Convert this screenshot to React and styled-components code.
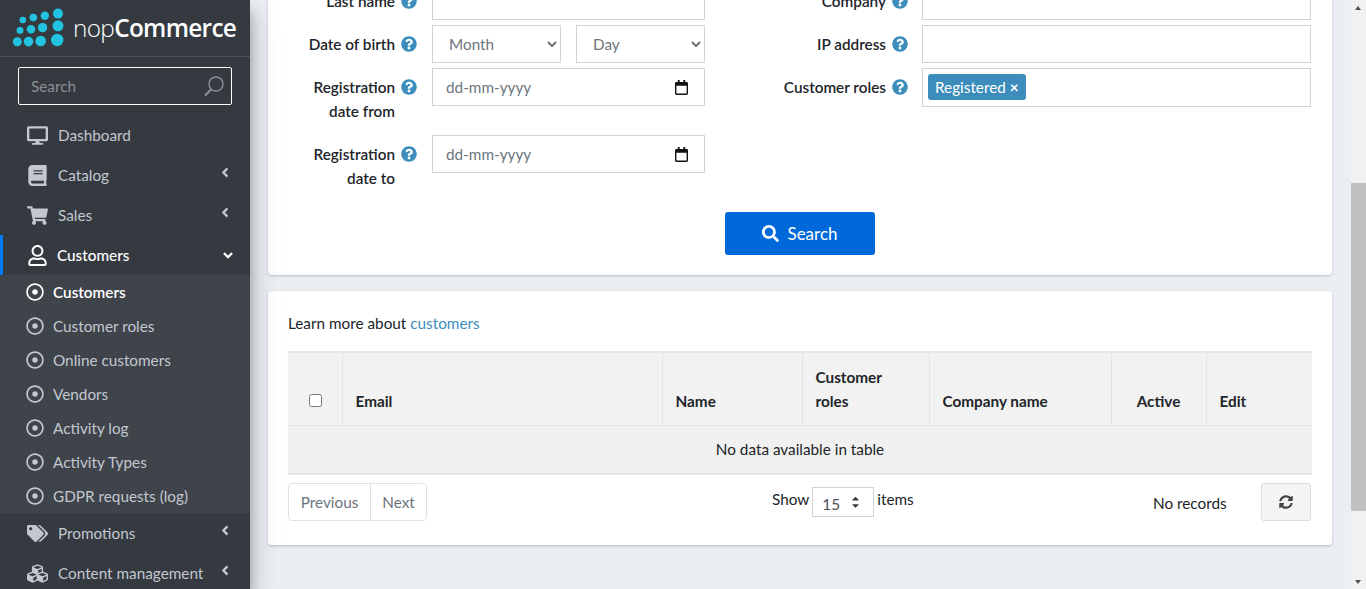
import React from "react";
import styled, { createGlobalStyle } from "styled-components";
import {
  FaDesktop,
  FaBook,
  FaShoppingCart,
  FaRegUser,
  FaRegDotCircle,
  FaTags,
  FaCubes,
  FaAngleLeft,
  FaAngleDown,
  FaQuestionCircle,
  FaSearch,
  FaSyncAlt,
  FaCaretUp,
  FaCaretDown
} from "react-icons/fa";

const GlobalStyle = createGlobalStyle`
  html, body, #root {
    margin: 0;
    height: 100%;
    overflow: hidden;
  }
  body {
    font-family: "Lato", "Liberation Sans", sans-serif;
    font-size: 15.3px;
    color: #212529;
    background: #ebeef3;
  }
`;

const Page = styled.div`
  display: flex;
  width: 1366px;
  height: 589px;
  overflow: hidden;
`;

const Sider = styled.aside`
  flex: 0 0 250px;
  background: #343a40;
  box-shadow: 0 14px 28px rgba(0, 0, 0, 0.25), 0 10px 10px rgba(0, 0, 0, 0.22);
  overflow: hidden;
  z-index: 2;
`;

const Brand = styled.div`
  display: flex;
  align-items: center;
  height: 56px;
  padding-left: 13px;
  border-bottom: 1px solid #4b545c;
`;

const BrandName = styled.span`
  margin-left: 8px;
  margin-top: -2px;
  font-family: "Open Sans", sans-serif;
  font-size: 24.4px;
  letter-spacing: -0.7px;
  color: #fff;
  font-weight: 300;
  b {
    font-weight: 600;
  }
`;

const SideSearch = styled.div`
  display: flex;
  align-items: center;
  justify-content: space-between;
  box-sizing: border-box;
  width: 214px;
  height: 38px;
  margin: 10px 0 10px 18px;
  padding: 0 6px 0 12px;
  border: 1px solid #fff;
  border-radius: 2px;
  color: #8b9096;
`;

const NavRow = styled.div`
  display: flex;
  align-items: center;
  box-sizing: border-box;
  height: 40px;
  padding-left: ${p => (p.$active ? "23px" : "26px")};
  border-left: ${p => (p.$active ? "3px solid #007bff" : "none")};
  color: ${p => (p.$active ? "#fff" : "#c2c7d0")};
  font-weight: ${p => (p.$active ? 500 : 400)};
`;

const NavIcon = styled.span`
  display: flex;
  justify-content: center;
  flex: 0 0 22px;
  margin-right: ${p => (p.$active ? "9px" : "10px")};
  font-size: 21px;
`;

const NavLabel = styled.span`
  flex: 1;
`;

const NavCaret = styled.span`
  display: flex;
  justify-content: center;
  width: 14px;
  margin: ${p => (p.$open ? "0 15px 0 0" : "-5px 18px 0 0")};
  font-size: 15px;
`;

const SubMenu = styled.div`
  background: #3f444b;
`;

const SubRow = styled.div`
  display: flex;
  align-items: center;
  gap: 9px;
  height: 34px;
  padding-left: 26px;
  color: ${p => (p.$active ? "#fff" : "#c2c7d0")};
  font-weight: ${p => (p.$active ? 600 : 400)};
  svg {
    font-size: 18px;
  }
`;

const Main = styled.main`
  flex: 1;
  min-width: 0;
  padding: 0 18px;
`;

const Card = styled.section`
  width: 1064px;
  box-sizing: border-box;
  background: #fff;
  border-radius: 4px;
  box-shadow: 0 1px 3px rgba(0, 0, 0, 0.2);
`;

const SearchCard = styled(Card)`
  margin-top: -18px;
  padding: 0 21px 20px;
`;

const ListCard = styled(Card)`
  margin-top: 16px;
  height: 254px;
  padding: 20px;
`;

const FormGrid = styled.div`
  display: flex;
`;

const FormColumn = styled.div`
  display: flex;
  flex-direction: column;
  gap: 5px;
  flex: ${p => (p.$right ? "0 0 590px" : "0 0 416px")};
  margin-left: ${p => (p.$right ? "16px" : "0")};
`;

const FormRow = styled.div`
  display: flex;
  height: ${p => p.$height}px;
`;

const FieldLabel = styled.label`
  flex: 0 0 ${p => (p.$wide ? "165px" : "106px")};
  text-align: right;
  font-weight: 600;
  line-height: 24px;
  padding-top: 7px;
  color: #212529;
`;

const HelpIcon = styled.span`
  flex: 0 0 ${p => (p.$wide ? "36px" : "37px")};
  padding: 11px 0 0 6px;
  box-sizing: border-box;
  color: #3c8dbc;
  font-size: 16px;
`;

const FieldBox = styled.div`
  flex: 1;
  height: ${p => p.$height || 38}px;
  box-sizing: border-box;
  border: 1px solid #ced4da;
  background: #fff;
`;

const DateBox = styled(FieldBox)`
  display: flex;
  align-items: center;
  justify-content: space-between;
  padding: 0 16px 0 13px;
  color: #6c757d;
`;

const RolesBox = styled(FieldBox)`
  padding: 5px 5px;
`;

const RoleTag = styled.span`
  display: inline-flex;
  align-items: center;
  gap: 4px;
  height: 26px;
  padding: 0 7px;
  border-radius: 3px;
  background: #3c8dbc;
  color: #fff;
`;

const SelectPair = styled.div`
  display: flex;
  gap: 15px;
  flex: 1;
`;

const NativeSelect = styled.select`
  flex: 1;
  min-width: 0;
  height: 38px;
  padding: 0 12px;
  border: 1px solid #ced4da;
  border-radius: 0;
  background: #fff;
  color: #6c757d;
  font: inherit;
`;

const ButtonRow = styled.div`
  display: flex;
  justify-content: center;
  margin-top: 15px;
`;

const SearchButton = styled.button`
  display: flex;
  align-items: center;
  justify-content: center;
  gap: 8px;
  width: 150px;
  height: 43px;
  border: 0;
  border-radius: 3px;
  background: #0069d9;
  color: #fff;
  font: inherit;
  font-size: 17px;
`;

const LearnMore = styled.div`
  line-height: 24px;
  margin-bottom: 16px;
  a {
    color: #3c8dbc;
  }
`;

const Table = styled.table`
  width: 1024px;
  table-layout: fixed;
  border-collapse: collapse;
  background: #f2f2f2;
  border-top: 2px solid #e6e6e6;
  border-bottom: 2px solid #e6e6e6;
`;

const Th = styled.th`
  box-sizing: border-box;
  height: 73px;
  padding: 0 13px 12px;
  vertical-align: bottom;
  text-align: ${p => p.$align || "left"};
  line-height: 24px;
  font-weight: 700;
  border-left: ${p => (p.$first ? "none" : "1px solid #e3e3e3")};
  border-bottom: 1px solid #e3e3e3;
`;

const EmptyCell = styled.td`
  box-sizing: border-box;
  height: 49px;
  padding: 0;
  text-align: center;
  background: #f0f0f0;
`;

const CheckMark = styled.input`
  display: block;
  width: 13px;
  height: 13px;
  margin: 0 0 6px 8px;
`;

const Footer = styled.div`
  display: flex;
  align-items: flex-start;
  margin-top: 8px;
`;

const Pager = styled.div`
  display: flex;
  flex: 0 0 139px;
  height: 38px;
  box-sizing: border-box;
  border: 1px solid #dee2e6;
  border-radius: 4px;
  color: #6c757d;
`;

const PagerItem = styled.span`
  display: flex;
  align-items: center;
  justify-content: center;
  flex: ${p => p.$grow};
  border-left: ${p => (p.$divider ? "1px solid #dee2e6" : "none")};
`;

const PageSize = styled.div`
  display: flex;
  align-items: flex-start;
  gap: 3px;
  margin: 4px 0 0 345px;
  line-height: 24px;
  flex: 0 0 143px;
`;

const SizeBox = styled.div`
  display: flex;
  align-items: center;
  justify-content: space-between;
  box-sizing: border-box;
  width: 62px;
  height: 30px;
  padding: 3px 12px 0 9px;
  border: 1px solid #ced4da;
  color: #495057;
`;

const SizeArrows = styled.span`
  display: flex;
  flex-direction: column;
  margin-top: -4px;
  font-size: 11px;
  color: #343a40;
  svg {
    display: block;
    margin: -2px 0;
  }
`;

const Records = styled.div`
  margin: 8px 0 0 238px;
  flex: 0 0 108px;
  line-height: 24px;
`;

const RefreshButton = styled.button`
  display: flex;
  flex: 0 0 50px;
  align-items: center;
  justify-content: center;
  height: 38px;
  border: 1px solid #dddddd;
  border-radius: 3px;
  background: #f4f4f4;
  color: #444;
  font-size: 14px;
`;

const ScrollTrack = styled.div`
  position: absolute;
  top: 0;
  right: 0;
  width: 15px;
  height: 589px;
  background: #f1f1f1;
  z-index: 3;
`;

const ScrollArrow = styled.span`
  position: absolute;
  left: 4px;
  ${p => (p.$down ? "bottom: 5px" : "top: 6px")};
  border-left: 3.5px solid transparent;
  border-right: 3.5px solid transparent;
  ${p => (p.$down ? "border-top" : "border-bottom")}: 4px solid #505050;
`;

const ScrollThumb = styled.div`
  position: absolute;
  top: 183px;
  left: 0;
  width: 15px;
  height: 328px;
  background: #c1c1c1;
`;

const LOGO_DOTS = [
  [22.8, 20, 3.3], [33.3, 17.6, 3.8], [44.8, 15.7, 4.2], [58, 13.6, 5],
  [20, 30.4, 3.4], [31, 29.2, 4.2], [42.6, 27.6, 4.7], [58, 25.8, 5.5],
  [17.3, 41.7, 4.5], [28.5, 41.6, 4.8], [40.7, 41, 5.3], [57.2, 40, 6.2]
];

const Logo = () => (
  <svg width="52" height="40" viewBox="13 8 52 40">
    {LOGO_DOTS.map(([cx, cy, r]) => (
      <circle key={`${cx}-${cy}`} cx={cx} cy={cy} r={r} fill="#22c3e0" />
    ))}
  </svg>
);

const Magnifier = () => (
  <svg width="22" height="22" viewBox="0 0 22 22" fill="none" stroke="#8b9096">
    <circle cx="13" cy="9" r="7" strokeWidth="1.4" />
    <path d="M8 14.5 L2 20.5" strokeWidth="2.2" />
  </svg>
);

const CalendarIcon = () => (
  <svg width="13" height="15" viewBox="0 0 14 16">
    <path
      d="M3 0h2v2h4V0h2v2h1.5A1.5 1.5 0 0 1 14 3.5v11a1.5 1.5 0 0 1-1.5 1.5h-11A1.5 1.5 0 0 1 0 14.5v-11A1.5 1.5 0 0 1 1.5 2H3V0zM1.5 6v8.5h11V6h-11z"
      fill="#111"
    />
  </svg>
);

const MENU_TOP = [
  { label: "Dashboard", icon: <FaDesktop /> },
  { label: "Catalog", icon: <FaBook />, caret: true },
  { label: "Sales", icon: <FaShoppingCart />, caret: true }
];

const MENU_SUB = [
  "Customer roles",
  "Online customers",
  "Vendors",
  "Activity log",
  "Activity Types",
  "GDPR requests (log)"
];

const MENU_BOTTOM = [
  { label: "Promotions", icon: <FaTags /> },
  { label: "Content management", icon: <FaCubes /> }
];

const NavItem = ({ label, icon, caret = true }) => (
  <NavRow>
    <NavIcon>{icon}</NavIcon>
    <NavLabel>{label}</NavLabel>
    {caret ? (
      <NavCaret>
        <FaAngleLeft />
      </NavCaret>
    ) : null}
  </NavRow>
);

const Help = ({ wide }) => (
  <HelpIcon $wide={wide}>
    <FaQuestionCircle />
  </HelpIcon>
);

const COLUMNS = [
  { width: 54, first: true, check: true },
  { width: 320, label: "Email" },
  { width: 140, label: "Name" },
  { width: 127, label: "Customer roles" },
  { width: 182, label: "Company name" },
  { width: 95, label: "Active", align: "center" },
  { width: 106, label: "Edit" }
];

export default function App() {
  return (
    <Page>
      <GlobalStyle />
      <Sider>
        <Brand>
          <Logo />
          <BrandName>
            nop<b>Commerce</b>
          </BrandName>
        </Brand>
        <SideSearch>
          Search
          <Magnifier />
        </SideSearch>
        {MENU_TOP.map(item => (
          <NavItem key={item.label} {...item} caret={!!item.caret} />
        ))}
        <NavRow $active>
          <NavIcon $active>
            <FaRegUser />
          </NavIcon>
          <NavLabel>Customers</NavLabel>
          <NavCaret $open>
            <FaAngleDown />
          </NavCaret>
        </NavRow>
        <SubMenu>
          <SubRow $active>
            <FaRegDotCircle />
            Customers
          </SubRow>
          {MENU_SUB.map(label => (
            <SubRow key={label}>
              <FaRegDotCircle />
              {label}
            </SubRow>
          ))}
        </SubMenu>
        {MENU_BOTTOM.map(item => (
          <NavItem key={item.label} {...item} />
        ))}
      </Sider>

      <Main>
        <SearchCard>
          <FormGrid>
            <FormColumn>
              <FormRow $height={38}>
                <FieldLabel>Last name</FieldLabel>
                <Help />
                <FieldBox />
              </FormRow>
              <FormRow $height={38}>
                <FieldLabel>Date of birth</FieldLabel>
                <Help />
                <SelectPair>
                  <NativeSelect defaultValue="Month">
                    <option>Month</option>
                  </NativeSelect>
                  <NativeSelect defaultValue="Day">
                    <option>Day</option>
                  </NativeSelect>
                </SelectPair>
              </FormRow>
              <FormRow $height={62}>
                <FieldLabel>
                  Registration
                  <br />
                  date from
                </FieldLabel>
                <Help />
                <DateBox>
                  dd-mm-yyyy
                  <CalendarIcon />
                </DateBox>
              </FormRow>
              <FormRow $height={62}>
                <FieldLabel>
                  Registration
                  <br />
                  date to
                </FieldLabel>
                <Help />
                <DateBox>
                  dd-mm-yyyy
                  <CalendarIcon />
                </DateBox>
              </FormRow>
            </FormColumn>
            <FormColumn $right>
              <FormRow $height={38}>
                <FieldLabel $wide>Company</FieldLabel>
                <Help wide />
                <FieldBox />
              </FormRow>
              <FormRow $height={38}>
                <FieldLabel $wide>IP address</FieldLabel>
                <Help wide />
                <FieldBox />
              </FormRow>
              <FormRow $height={62}>
                <FieldLabel $wide>Customer roles</FieldLabel>
                <Help wide />
                <RolesBox $height={39}>
                  <RoleTag>
                    Registered <b>×</b>
                  </RoleTag>
                </RolesBox>
              </FormRow>
            </FormColumn>
          </FormGrid>
          <ButtonRow>
            <SearchButton>
              <FaSearch />
              Search
            </SearchButton>
          </ButtonRow>
        </SearchCard>

        <ListCard>
          <LearnMore>
            Learn more about <a>customers</a>
          </LearnMore>
          <Table>
            <colgroup>
              {COLUMNS.map((col, i) => (
                <col key={i} width={col.width} />
              ))}
            </colgroup>
            <thead>
              <tr>
                {COLUMNS.map((col, i) => (
                  <Th key={i} $first={col.first} $align={col.align}>
                    {col.check ? <CheckMark type="checkbox" /> : col.label}
                  </Th>
                ))}
              </tr>
            </thead>
            <tbody>
              <tr>
                <EmptyCell colSpan={7}>No data available in table</EmptyCell>
              </tr>
            </tbody>
          </Table>
          <Footer>
            <Pager>
              <PagerItem $grow="0 0 81px">Previous</PagerItem>
              <PagerItem $grow="1" $divider>
                Next
              </PagerItem>
            </Pager>
            <PageSize>
              Show
              <SizeBox>
                15
                <SizeArrows>
                  <FaCaretUp />
                  <FaCaretDown />
                </SizeArrows>
              </SizeBox>
              items
            </PageSize>
            <Records>No records</Records>
            <RefreshButton>
              <FaSyncAlt />
            </RefreshButton>
          </Footer>
        </ListCard>
      </Main>

      <ScrollTrack>
        <ScrollArrow />
        <ScrollThumb />
        <ScrollArrow $down />
      </ScrollTrack>
    </Page>
  );
}
